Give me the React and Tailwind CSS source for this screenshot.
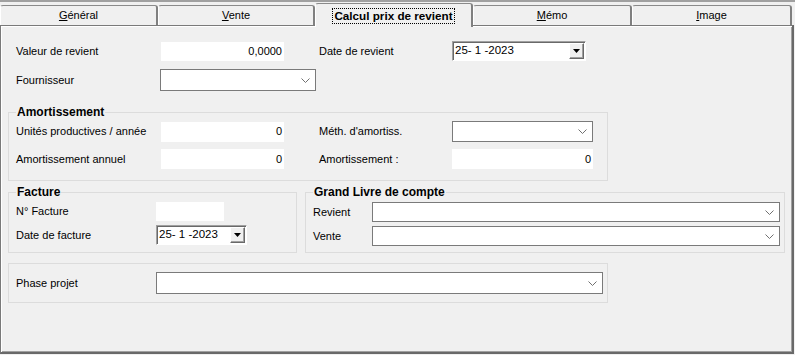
const font = { fontFamily: '"Liberation Sans", Arial, sans-serif' };

const Chevron = () => (
  <svg width="9" height="5" viewBox="0 0 9 5" className="block">
    <path d="M0.5 0.5 L4.5 4.5 L8.5 0.5" fill="none" stroke="#707070" strokeWidth="1" />
  </svg>
);

const Combo = ({ className }) => (
  <div className={`bg-white border border-[#7a7a7a] flex items-center justify-end pr-[5px] ${className}`}>
    <Chevron />
  </div>
);

const Edit = ({ className, value }) => (
  <div className={`bg-white flex items-center justify-end pr-[2px] text-[11px] ${className}`}>{value}</div>
);

const DateBox = ({ className }) => (
  <div
    className={`bg-white flex items-center border border-t-[#a0a0a0] border-l-[#a0a0a0] border-r-white border-b-white shadow-[inset_1px_1px_0_#696969] ${className}`}
  >
    <span className="pl-[2px] text-[11.5px] leading-none whitespace-nowrap">25- 1 -2023</span>
    <div className="ml-auto mr-[1px] w-[15px] h-[16px] bg-[#f0f0f0] border border-t-white border-l-white border-r-[#696969] border-b-[#696969] shadow-[inset_-1px_-1px_0_#a0a0a0] flex items-center justify-center">
      <svg width="7" height="4" viewBox="0 0 7 4" className="block">
        <path d="M0 0 H7 L3.5 4 Z" fill="#000" />
      </svg>
    </div>
  </div>
);

const Label = ({ className, children }) => (
  <div className={`text-[11px] leading-none whitespace-nowrap shrink-0 ${className}`}>{children}</div>
);

const Group = ({ title, className, children }) => (
  <fieldset className={`border border-[#dcdcdc] pl-[7px] ${className}`}>
    <legend className="px-[1px] text-[12px] font-bold leading-[14px]">{title}</legend>
    {children}
  </fieldset>
);

const Tab = ({ children, className }) => (
  <div
    className={`h-[20px] flex items-center justify-center text-[11px] bg-[#f0f0f0] border-t border-l border-r-2 border-t-[#8a8a8a] border-l-white border-r-[#808080] rounded-t-[3px] ${className}`}
  >
    {children}
  </div>
);

export default function App() {
  return (
    <div style={font} className="w-[795px] h-[355px] bg-[#f0f0f0] text-black flex flex-col overflow-hidden border-t-2 border-[#a0a0a0]">
      {/* tab strip */}
      <div className="h-[23px] flex items-end shrink-0">
        <Tab className="w-[158px]">
          <span><span className="underline">G</span>énéral</span>
        </Tab>
        <Tab className="w-[157px]">
          <span><span className="underline">V</span>ente</span>
        </Tab>
        <div className="relative z-10 w-[158px] h-[24px] -mb-[2px] bg-[#f0f0f0] border-t border-l border-r-2 border-t-[#8a8a8a] border-l-white border-r-[#808080] rounded-t-[3px] flex justify-center pt-[4px]">
          <span className="h-[16px] px-[1px] border border-dotted border-black text-[11.7px] font-bold leading-[14px] whitespace-nowrap">
            Calcul prix de revient
          </span>
        </div>
        <Tab className="w-[159px]">
          <span><span className="underline">M</span>émo</span>
        </Tab>
        <Tab className="w-[160px]">
          <span><span className="underline">I</span>mage</span>
        </Tab>
      </div>

      {/* panel */}
      <div className="flex-1 mr-[1px] mb-[1px] border-l border-t border-[#7a7a7a] border-r-2 border-b-2 border-r-[#696969] border-b-[#696969] shadow-[inset_1px_1px_0_#fff,inset_-1px_-1px_0_#a0a0a0] pl-[7px] pt-[15px] flex flex-col">
        <div className="flex items-center pl-[8px]">
          <Label className="w-[145px]">Valeur de revient</Label>
          <Edit className="w-[123px] h-[19px]" value="0,0000" />
          <Label className="ml-[35px] w-[133px]">Date de revient</Label>
          <DateBox className="w-[134px] h-[20px]" />
        </div>
        <div className="flex items-center pl-[8px] mt-[8px]">
          <Label className="w-[144px]">Fournisseur</Label>
          <Combo className="w-[156px] h-[22px]" />
        </div>

        <Group title="Amortissement" className="w-[600px] mt-[14px] pb-[11px]">
          <div className="flex items-center mt-[2px]">
            <Label className="w-[145px]">Unités productives / année</Label>
            <Edit className="w-[123px] h-[20px]" value="0" />
            <Label className="ml-[35px] w-[133px]">Méth. d'amortiss.</Label>
            <Combo className="w-[141px] h-[21px]" />
          </div>
          <div className="flex items-center mt-[7px]">
            <Label className="w-[145px]">Amortissement annuel</Label>
            <Edit className="w-[123px] h-[20px]" value="0" />
            <Label className="ml-[35px] w-[133px]">Amortissement :</Label>
            <Edit className="w-[141px] h-[20px]" value="0" />
          </div>
        </Group>

        <div className="flex gap-[8px] mt-[4px]">
          <Group title="Facture" className="w-[289px] pb-[7px]">
            <div className="flex items-center mt-[3px]">
              <Label className="w-[140px]">N° Facture</Label>
              <Edit className="w-[68px] h-[19px]" value="" />
            </div>
            <div className="flex items-center mt-[4px]">
              <Label className="w-[140px]">Date de facture</Label>
              <DateBox className="w-[91px] h-[20px]" />
            </div>
          </Group>
          <Group title="Grand Livre de compte" className="w-[480px] pb-[6px]">
            <div className="flex items-center mt-[3px]">
              <Label className="w-[59px]">Revient</Label>
              <Combo className="w-[408px] h-[20px]" />
            </div>
            <div className="flex items-center mt-[4px]">
              <Label className="w-[59px]">Vente</Label>
              <Combo className="w-[408px] h-[20px]" />
            </div>
          </Group>
        </div>

        <div className="w-[600px] h-[40px] mt-[10px] border border-[#dcdcdc] flex items-center pl-[7px]">
          <Label className="w-[140px]">Phase projet</Label>
          <Combo className="w-[447px] h-[22px]" />
        </div>
      </div>
    </div>
  );
}
